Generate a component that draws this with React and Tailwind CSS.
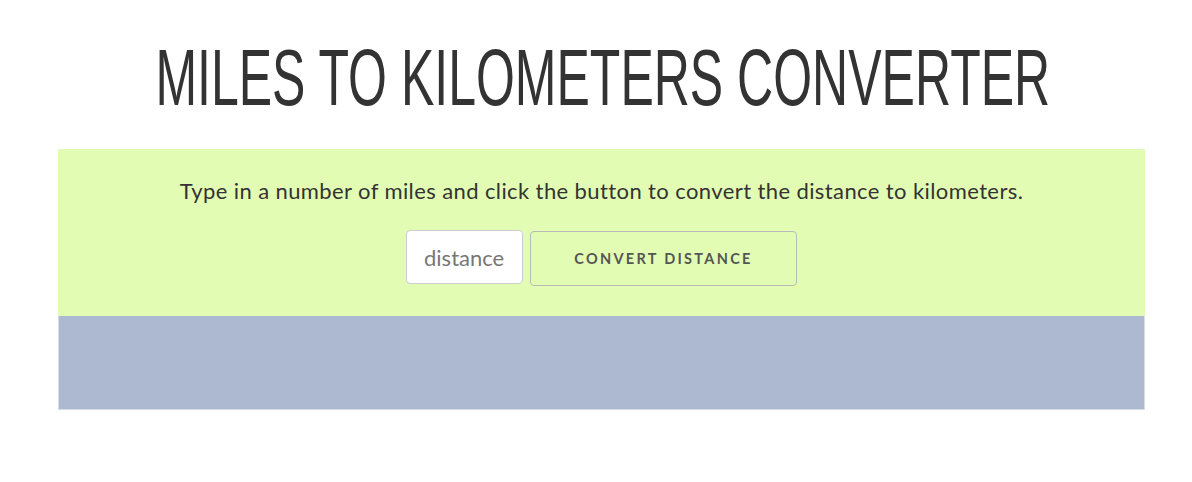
import React, { useState } from 'react';

const App = () => {
  const [miles, setMiles] = useState('');
  const [result, setResult] = useState('');

  const handleConvert = () => {
    const value = parseFloat(miles);
    if (isNaN(value)) {
      setResult('');
      return;
    }
    setResult(`${value} miles is ${(value * 1.609344).toFixed(2)} kilometers.`);
  };

  return (
    <div className="min-h-[482px] bg-white">
      <div className="flex justify-center pl-[13px] pt-[35px] h-[149px] overflow-hidden">
        <h1
          className="inline-block origin-center scale-x-[0.633] text-[79px] leading-[86px] text-[#333333] whitespace-nowrap"
          style={{ fontFamily: '"Liberation Sans Narrow", "Liberation Sans", sans-serif' }}
        >
          MILES TO KILOMETERS CONVERTER
        </h1>
      </div>

      <div className="ml-[58px] w-[1087px]" style={{ fontFamily: 'Lato, "Liberation Sans", sans-serif' }}>
        <div className="bg-[#e2fdb3] h-[167px] flex flex-col items-center pt-[27px]">
          <p className="text-[22px] leading-[29px] tracking-[0.4px] text-[#333333]">
            Type in a number of miles and click the button to convert the distance to kilometers.
          </p>
          <div className="flex items-start gap-[7px] mt-[25px]">
            <input
              type="text"
              value={miles}
              onChange={(e) => setMiles(e.target.value)}
              placeholder="distance"
              className="w-[117px] h-[54px] bg-white border border-[#cccccc] rounded-[4px] px-[17px] text-[22px] text-[#555555] placeholder:text-[#777777] outline-none"
            />
            <button
              onClick={handleConvert}
              className="w-[267px] h-[55px] border border-[#b9b9b9] rounded-[4px] text-[14.5px] font-bold tracking-[2.3px] text-[#555555] mt-px"
            >
              CONVERT DISTANCE
            </button>
          </div>
        </div>
        <div className="bg-[#adb9d1] h-[94px] border border-t-0 border-[#d7dce6] flex items-center justify-center text-[20px] text-[#333333]">
          {result}
        </div>
      </div>
    </div>
  );
};

export default App;
